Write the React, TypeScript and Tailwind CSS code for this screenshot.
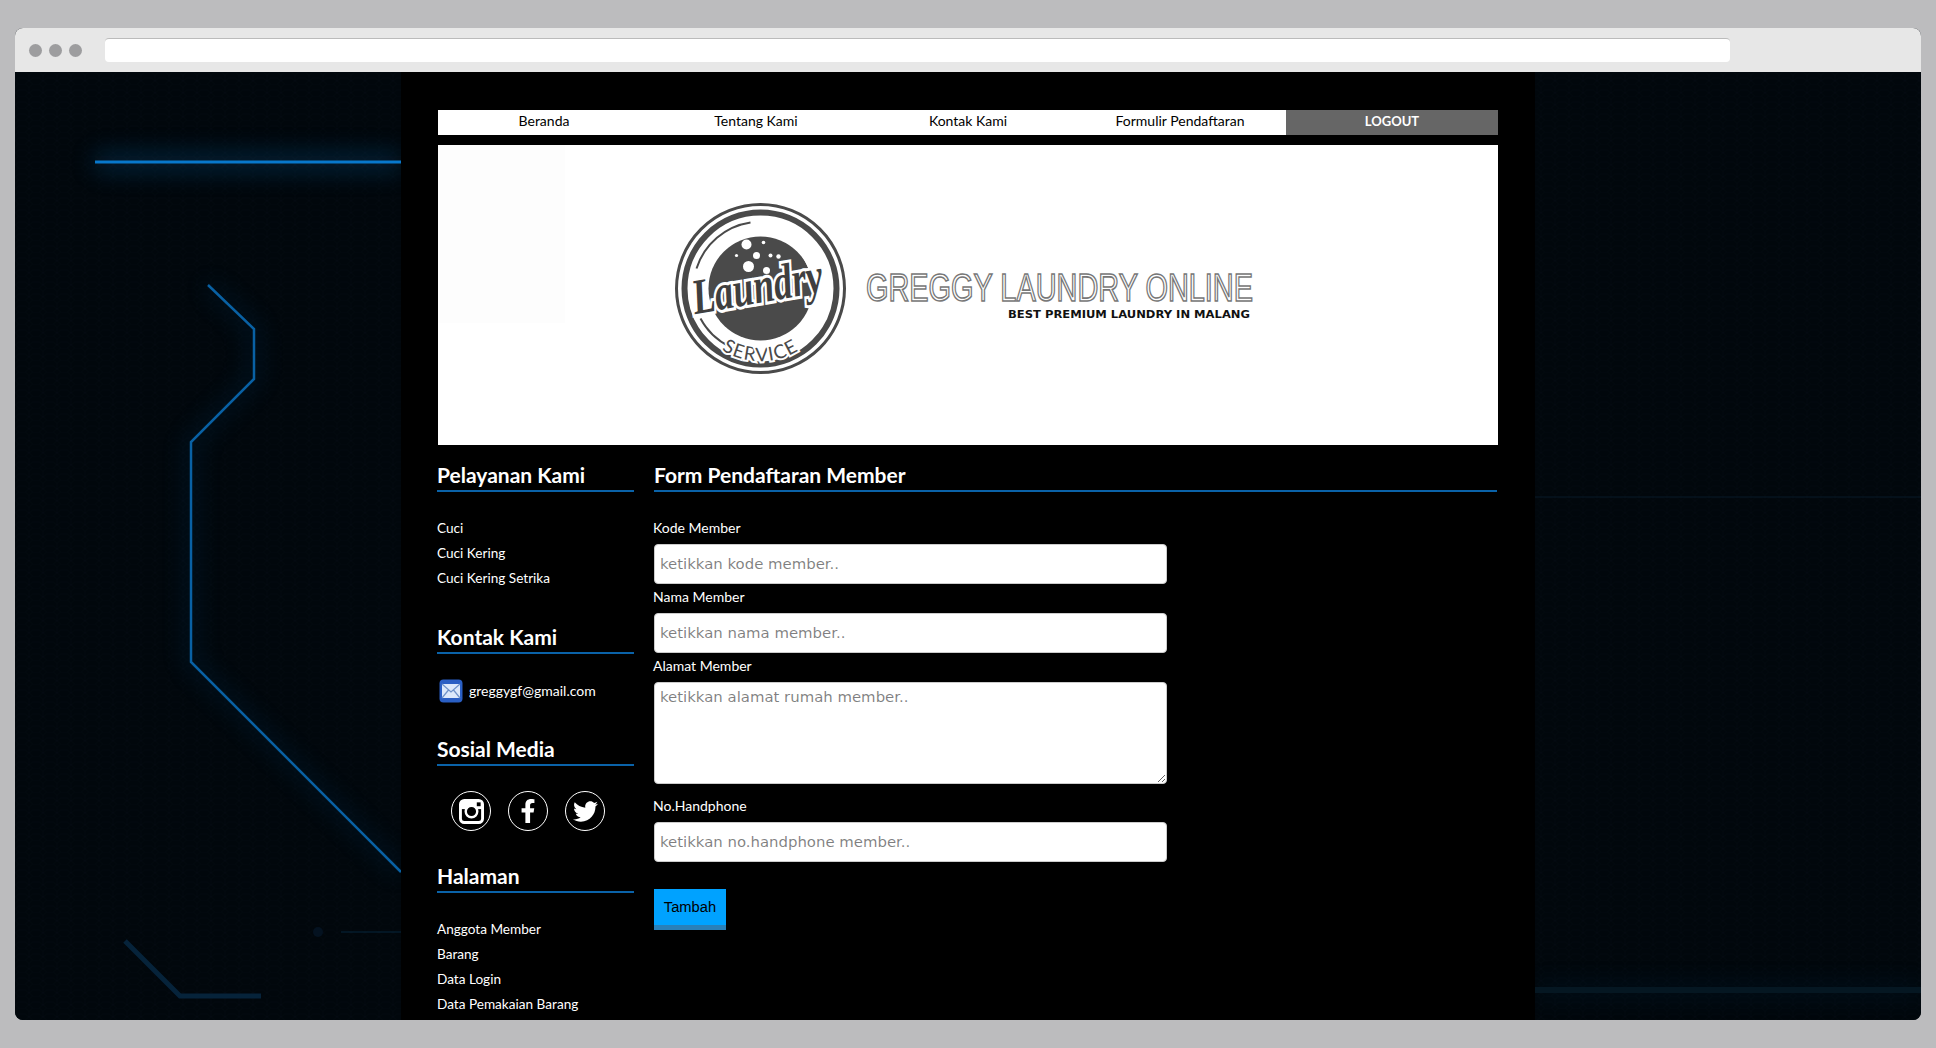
import { FaFacebookF, FaTwitter } from 'react-icons/fa';

const sans = "font-['Lato','Liberation_Sans',sans-serif]";

const navItems = ['Beranda', 'Tentang Kami', 'Kontak Kami', 'Formulir Pendaftaran'];
const services = ['Cuci', 'Cuci Kering', 'Cuci Kering Setrika'];
const pages = ['Anggota Member', 'Barang', 'Data Login', 'Data Pemakaian Barang'];

function Heading({ children }: { children: string }) {
  return (
    <h2 className="h-[30px] border-b-2 border-[#0a62a8] text-[21px] leading-[26px] font-bold text-white">
      {children}
    </h2>
  );
}

function LinkList({ items }: { items: string[] }) {
  return (
    <ul className="mt-6 text-[13.6px] leading-[25px] text-white">
      {items.map((item) => (
        <li key={item}>{item}</li>
      ))}
    </ul>
  );
}

function Backdrop() {
  return (
    <svg className="absolute inset-0 h-full w-full" viewBox="0 0 1906 948" preserveAspectRatio="none">
      <defs>
        <pattern id="hex" width="14" height="12" patternUnits="userSpaceOnUse">
          <path d="M0 3 L4 0 L10 0 L14 3 M4 12 L0 9 L0 3 M14 3 L14 9 L10 12 M0 9 L4 6 L10 6 L14 9" fill="none" stroke="#0a1a24" strokeWidth="0.5" opacity="0.15" />
        </pattern>
        <filter id="glow" x="-30%" y="-30%" width="160%" height="160%">
          <feGaussianBlur stdDeviation="12" />
        </filter>
      </defs>
      <rect width="1906" height="948" fill="#01070c" />
      <rect width="1906" height="948" fill="url(#hex)" />
      <g fill="none" stroke="#0a5f9c" filter="url(#glow)" opacity="0.35">
        <path d="M80 90 H386" strokeWidth="18" />
        <path d="M193 213 L239 257 V307 L176 370 V590 L386 800" strokeWidth="10" opacity="0.6" />
        <path d="M1520 918 H1906" strokeWidth="16" opacity="0.3" />
      </g>
      <path d="M80 90 H386" fill="none" stroke="#0878cc" strokeWidth="3" />
      <path d="M193 213 L239 257 V307 L176 370 V590 L386 800" fill="none" stroke="#0961a4" strokeWidth="2.5" />
      <path d="M110 869 L165 924 H246" fill="none" stroke="#06233a" strokeWidth="5" />
      <path d="M326 860 H386" fill="none" stroke="#07263c" strokeWidth="1" />
      <circle cx="303" cy="860" r="5" fill="#041220" />
      <path d="M1520 425 H1906" fill="none" stroke="#081a28" strokeWidth="1" />
      <path d="M1520 918 H1906" fill="none" stroke="#051722" strokeWidth="6" />
    </svg>
  );
}

function BannerArt() {
  return (
    <svg className="h-full w-full" viewBox="0 0 1060 300">
      <rect x="0" y="0" width="127" height="178" fill="#fdfdfd" />
      <g transform="translate(322.5 143.5)">
        <circle r="84" fill="#fff" stroke="#4a4a4a" strokeWidth="3" />
        <circle r="76" fill="none" stroke="#4a4a4a" strokeWidth="6" />
        <circle r="52" fill="#4a4a4a" />
        <path d="M-64 -20 A67 67 0 0 1 -10 -66" fill="none" stroke="#4a4a4a" strokeWidth="2" />
        <path d="M-60 30 A66 66 0 0 0 -20 62" fill="none" stroke="#4a4a4a" strokeWidth="2" />
        <path d="M36 -40 A58 58 0 0 1 42 42 A70 70 0 0 0 36 -40Z" fill="#fff" />
        <g fill="#fff">
          <circle cx="-14" cy="-44" r="5" />
          <circle cx="-4" cy="-33" r="3.5" />
          <circle cx="-12" cy="-22" r="5.5" />
          <circle cx="3" cy="-46" r="1.8" />
          <circle cx="10" cy="-33" r="2" />
          <circle cx="-24" cy="-33" r="1.6" />
          <circle cx="18" cy="-32" r="2.2" />
          <circle cx="6" cy="-18" r="3.5" />
        </g>
        <text
          x="-3"
          y="14"
          textAnchor="middle"
          transform="rotate(-10)"
          fontFamily="'Liberation Serif', serif"
          fontStyle="italic"
          fontWeight="700"
          fontSize="50"
          textLength="132"
          lengthAdjust="spacingAndGlyphs"
          fill="#3f3f3f"
          stroke="#fff"
          strokeWidth="6"
          paintOrder="stroke"
        >
          Laundry
        </text>
        <path id="serviceArc" d="M-56 46 A72 72 0 0 0 56 46" fill="none" />
        <text fontFamily="'Lato', sans-serif" fontSize="19" fill="#4a4a4a" stroke="#fff" strokeWidth="4" paintOrder="stroke" letterSpacing="1">
          <textPath href="#serviceArc" startOffset="50%" textAnchor="middle">
            SERVICE
          </textPath>
        </text>
      </g>
      <text
        x="428"
        y="156"
        fontFamily="'Liberation Sans', sans-serif"
        fontSize="39"
        textLength="387"
        lengthAdjust="spacingAndGlyphs"
        fill="#fff"
        stroke="#777"
        strokeWidth="1.6"
      >
        GREGGY LAUNDRY ONLINE
      </text>
      <text
        x="570"
        y="173"
        fontFamily="'DejaVu Sans', sans-serif"
        fontSize="10.5"
        fontWeight="700"
        textLength="242"
        lengthAdjust="spacingAndGlyphs"
        fill="#111"
      >
        BEST PREMIUM LAUNDRY IN MALANG
      </text>
    </svg>
  );
}

function MailIcon() {
  return (
    <svg className="h-[24px] w-[24px] shrink-0" viewBox="0 0 24 24">
      <rect x="0.5" y="0.5" width="23" height="23" rx="4" fill="#2a5fc4" />
      <rect x="3" y="5" width="18" height="14" fill="#dce9fb" />
      <path d="M3 5 L12 13 L21 5 M3 19 L9.5 11 M21 19 L14.5 11" fill="none" stroke="#6f93c9" strokeWidth="1.2" />
    </svg>
  );
}

function SocialCircle({ children }: { children: React.ReactNode }) {
  return (
    <div className="flex h-10 w-10 items-center justify-center rounded-full border-[1.5px] border-white text-white">
      {children}
    </div>
  );
}

function FieldLabel({ children }: { children: string }) {
  return <label className="-ml-px block h-[29px] text-[14px] leading-[25px] text-white">{children}</label>;
}

function Field({ label, placeholder }: { label: string; placeholder: string }) {
  return (
    <>
      <FieldLabel>{label}</FieldLabel>
      <input
        placeholder={placeholder}
        className="block h-10 w-[513px] rounded border border-[#ccc] bg-white px-[5px] font-['DejaVu_Sans',sans-serif] text-[14.9px] text-black"
      />
    </>
  );
}

export default function App() {
  return (
    <div className={`h-[1048px] w-[1936px] overflow-hidden bg-[#bcbcbe] pt-[28px] pl-[15px] ${sans}`}>
      <div className="flex h-[992px] w-[1906px] flex-col overflow-hidden rounded-[8px] bg-[#01070c]">
        <div className="flex h-[44px] shrink-0 items-center bg-[#e7e7e7] pl-[14px]">
          <div className="flex gap-[7px]">
            <span className="h-[13px] w-[13px] rounded-full bg-[#9d9d9f]" />
            <span className="h-[13px] w-[13px] rounded-full bg-[#9d9d9f]" />
            <span className="h-[13px] w-[13px] rounded-full bg-[#9d9d9f]" />
          </div>
          <div className="ml-[23px] h-[24px] w-[1625px] rounded-[4px] border-t border-[#bbb] bg-white" />
        </div>

        <div className="relative flex-1 overflow-hidden">
          <Backdrop />
          <div className="relative mx-auto h-full w-[1134px] overflow-hidden bg-black px-[37px] pt-[38px]">
            <nav className="grid h-[25px] grid-cols-5 bg-white text-center text-[14px] leading-[22px] text-black">
              {navItems.map((item) => (
                <a key={item}>{item}</a>
              ))}
              <a className="bg-[#666] text-[13px] font-bold text-white">LOGOUT</a>
            </nav>

            <div className="mt-[10px] h-[300px] bg-white">
              <BannerArt />
            </div>

            <div className="mt-[17px] flex gap-5">
              <aside className="-ml-px w-[197px] shrink-0">
                <Heading>Pelayanan Kami</Heading>
                <LinkList items={services} />

                <div className="mt-[33px]">
                  <Heading>Kontak Kami</Heading>
                  <div className="mt-[25px] flex items-center gap-[6px] pl-[2px] text-[14px] text-white">
                    <MailIcon />
                    <span className="-mt-[2px]">greggygf@gmail.com</span>
                  </div>
                </div>

                <div className="mt-[33px]">
                  <Heading>Sosial Media</Heading>
                  <div className="mt-[25px] flex gap-[17px] pl-[14px]">
                    <SocialCircle>
                      <svg className="h-[25px] w-[25px]" viewBox="0 0 26 26">
                        <rect x="1.5" y="1.5" width="23" height="23" rx="4" fill="none" stroke="#fff" strokeWidth="3" />
                        <rect x="1.5" y="3" width="23" height="7.5" fill="#fff" />
                        <circle cx="13" cy="13" r="6" fill="#000" stroke="#fff" strokeWidth="2.5" />
                        <rect x="18.5" y="3.5" width="4" height="4" fill="#000" />
                      </svg>
                    </SocialCircle>
                    <SocialCircle>
                      <FaFacebookF size={24} />
                    </SocialCircle>
                    <SocialCircle>
                      <FaTwitter size={25} />
                    </SocialCircle>
                  </div>
                </div>

                <div className="mt-[32px]">
                  <Heading>Halaman</Heading>
                  <LinkList items={pages} />
                </div>
              </aside>

              <main className="w-[843px]">
                <Heading>Form Pendaftaran Member</Heading>
                <form className="mt-[23px]">
                  <Field label="Kode Member" placeholder="ketikkan kode member.." />
                  <Field label="Nama Member" placeholder="ketikkan nama member.." />
                  <FieldLabel>Alamat Member</FieldLabel>
                  <textarea
                    placeholder="ketikkan alamat rumah member.."
                    className="block h-[102px] w-[513px] rounded border border-[#ccc] bg-white px-[5px] pt-[3px] font-['DejaVu_Sans',sans-serif] text-[14.9px] text-black"
                  />
                  <div className="mt-[9px]">
                    <Field label="No.Handphone" placeholder="ketikkan no.handphone member.." />
                  </div>
                  <button
                    type="button"
                    className="mt-[27px] block h-[41px] w-[72px] border-b-[5px] border-[#2980b9] bg-[#00a2ff] font-['Liberation_Sans',sans-serif] text-[14.7px] text-black"
                  >
                    Tambah
                  </button>
                </form>
              </main>
            </div>
          </div>
        </div>
      </div>
    </div>
  );
}
